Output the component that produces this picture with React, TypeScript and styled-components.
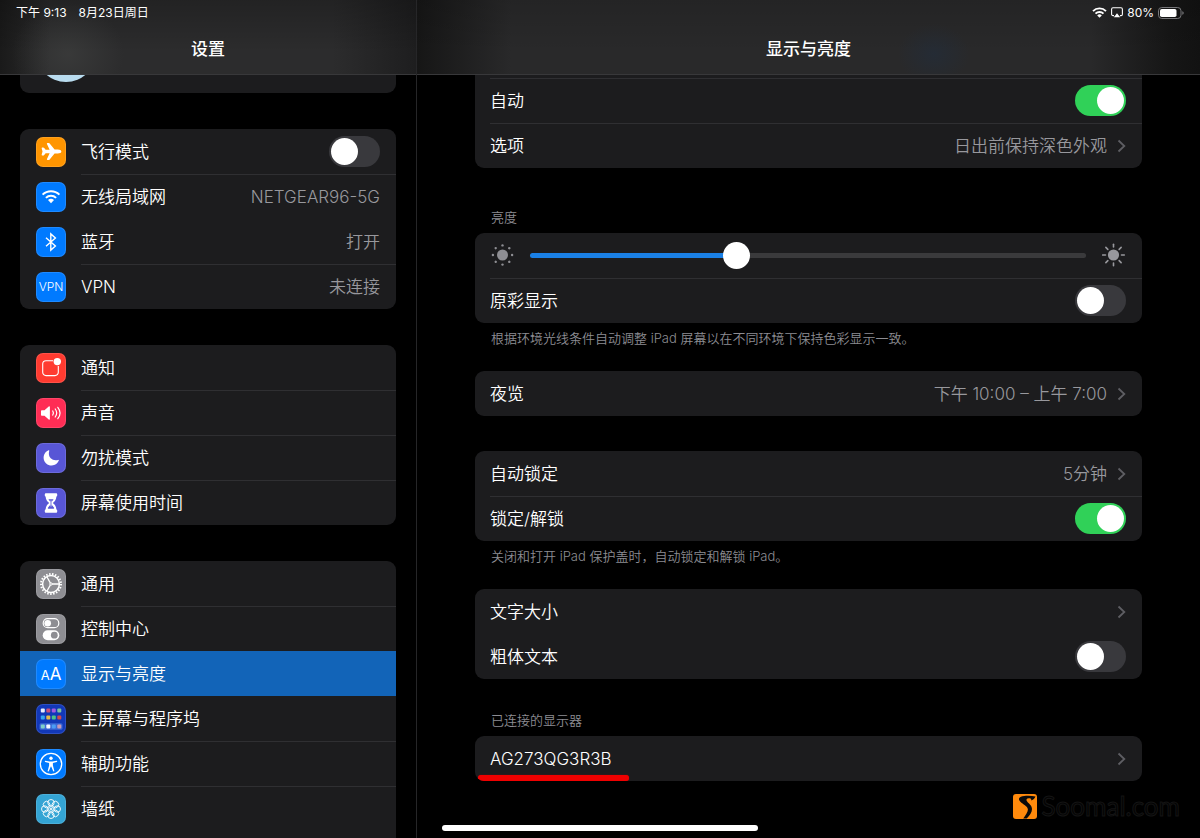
import React, { useState } from "react";
import styled, { createGlobalStyle, css } from "styled-components";
import { IoAirplane } from "react-icons/io5";

const GlobalStyle = createGlobalStyle`
  *, *::before, *::after { box-sizing: border-box; }
  html, body { margin: 0; background: #000; }
  body {
    color: #fff;
    font-family: Inter, "Noto Sans CJK SC", sans-serif;
    font-size: 17px;
    line-height: 25px;
    font-weight: 350;
  }
`;

/* ---------- page frame ---------- */

const Shell = styled.div`
  position: relative;
  display: grid;
  grid-template-columns: minmax(280px, 26fr) 49fr;
  height: 100vh;
  overflow: hidden;
  background: #000;
`;

const Pane = styled.section`
  display: flex;
  flex-direction: column;
  min-width: 0;
  min-height: 0;

  & + & {
    border-left: 1px solid #262628;
  }
`;

const headerTint = {
  sidebar: css`
    background:
      radial-gradient(ellipse 56px 52px at 68px 54px, rgba(80, 82, 80, 0.35), transparent),
      linear-gradient(to bottom, rgba(0, 0, 0, 0.22), transparent 70%),
      linear-gradient(to right, #1a1a1a, #2c2c2d 12%, #2c2c2d 80%, #1e1e1f);
  `,
  detail: css`
    background:
      radial-gradient(ellipse 36px 30px at 66% 54px, rgba(32, 46, 64, 0.5), transparent),
      linear-gradient(to bottom, rgba(0, 0, 0, 0.12), transparent 70%),
      linear-gradient(to right, #161616, #29292a 12%, #29292a 86%, #161616 96%, #121212);
  `,
};

const PaneHeader = styled.header<{ $tint: keyof typeof headerTint }>`
  flex: none;
  height: 75px;
  border-bottom: 1px solid #38383a;
  ${({ $tint }) => headerTint[$tint]}
`;

const StatusBar = styled.div<{ $end?: boolean }>`
  display: flex;
  align-items: center;
  justify-content: ${({ $end }) => ($end ? "flex-end" : "flex-start")};
  gap: ${({ $end }) => ($end ? "4px" : "12px")};
  height: 25px;
  padding: 0 16px;
  font-size: 12px;
  line-height: 17px;
  font-weight: 400;
`;

const Title = styled.h1`
  margin: 0;
  padding: 12px 0;
  font-size: 17px;
  line-height: 25px;
  font-weight: 500;
  text-align: center;
`;

const Scroll = styled.div<{ $inset: string }>`
  flex: 1;
  display: flex;
  flex-direction: column;
  min-height: 0;
  overflow: hidden;
  padding: 0 ${({ $inset }) => $inset};
`;

/* ---------- cards and rows ---------- */

const Card = styled.div<{ $gap?: string; $cut?: "top" | "bottom" }>`
  position: relative;
  flex: ${({ $cut }) => ($cut === "bottom" ? "1 0 auto" : "none")};
  margin-top: ${({ $gap = "0" }) => $gap};
  padding-top: ${({ $cut }) => ($cut === "top" ? "3px" : "0")};
  border-radius: ${({ $cut }) =>
    $cut === "top" ? "0 0 9px 9px" : $cut === "bottom" ? "9px 9px 0 0" : "9px"};
  overflow: hidden;
  background: #1c1c1e;
`;

const ProfileCard = styled.div`
  flex: none;
  display: flex;
  align-items: flex-end;
  height: 18px;
  padding: 0 16px 11px;
  border-radius: 0 0 9px 9px;
  overflow: hidden;
  background: #1c1c1e;
`;

const Avatar = styled.div`
  flex: none;
  width: 60px;
  height: 60px;
  border-radius: 50%;
  background: #b9dcef;
`;

const rowStyle = css`
  display: flex;
  align-items: center;
  width: 100%;
  height: 45px;
  padding: 0;
  border: 0;
  background: none;
  color: #fff;
  font: inherit;
  text-align: left;
  text-decoration: none;
  cursor: pointer;
`;

const RowLink = styled.a<{ $active?: boolean }>`
  ${rowStyle}
  ${({ $active }) => $active && "background: #1264b8;"}
`;

const RowLabel = styled.label`
  ${rowStyle}
`;

const RowButton = styled.button`
  ${rowStyle}
`;

const RowBody = styled.span<{ $line?: boolean }>`
  flex: 1;
  display: flex;
  align-items: center;
  justify-content: space-between;
  height: 45px;
  min-width: 0;
  margin-left: 15px;
  padding-right: 16px;
  box-shadow: inset 0 1px ${({ $line }) => ($line ? "#2f2f32" : "transparent")};
`;

const Name = styled.span`
  padding-top: 2px;
  white-space: nowrap;
`;

const Value = styled(Name)`
  color: #98989d;
`;

const Trailing = styled.span`
  display: flex;
  align-items: center;
  gap: 10px;
`;

const Caption = styled.h2<{ $gap: string }>`
  flex: none;
  margin: ${({ $gap }) => $gap} 16px 7px;
  font-size: 13px;
  line-height: 18px;
  font-weight: 350;
  color: #8c8c92;
`;

const Footnote = styled.p`
  flex: none;
  margin: 6px 16px 24px;
  font-size: 13px;
  line-height: 18px;
  color: #8c8c92;
  white-space: nowrap;
`;

const SliderRow = styled.div`
  display: flex;
  align-items: center;
  gap: 16px;
  height: 44px;
  margin-bottom: 1px;
  padding: 0 16px 0 15px;
`;

/* ---------- controls ---------- */

const Switch = styled.input.attrs({ type: "checkbox", role: "switch" })`
  appearance: none;
  flex: none;
  width: 51px;
  height: 31px;
  margin: 0;
  padding: 2px;
  border-radius: 16px;
  background: #39393d;
  cursor: pointer;

  &::before {
    content: "";
    display: block;
    width: 27px;
    height: 27px;
    border-radius: 50%;
    background: #fff;
  }
  &:checked {
    background: #30d158;
  }
  &:checked::before {
    margin-left: 20px;
  }
`;

const Range = styled.input.attrs({ type: "range" })`
  appearance: none;
  flex: 1;
  min-width: 0;
  height: 27px;
  margin: 0;
  background: none;

  &::-webkit-slider-runnable-track {
    height: 5px;
    border-radius: 3px;
    background: linear-gradient(to right, #1a80e6 var(--fill), #3a3a3c var(--fill));
  }
  &::-webkit-slider-thumb {
    appearance: none;
    width: 27px;
    height: 27px;
    margin-top: -11px;
    border-radius: 50%;
    background: #fff;
  }
`;

const Tile = styled.span<{ $bg: string }>`
  flex: none;
  display: flex;
  align-items: center;
  justify-content: center;
  width: 30px;
  height: 30px;
  margin-left: 16px;
  border-radius: 7px;
  box-shadow: inset 0 0 0 1px rgba(255, 255, 255, 0.12);
  background: ${({ $bg }) => $bg};
  color: #fff;
  overflow: hidden;
`;

const TileText = styled.span`
  font-size: 12px;
  line-height: 17px;
`;

const TileLetters = styled.span`
  padding-top: 2px;
  font-size: 17px;
  line-height: 18px;
  font-weight: 400;

  small {
    font-size: 13px;
  }
`;

/* ---------- overlays ---------- */

const Underline = styled.span`
  position: absolute;
  left: 3px;
  bottom: 0;
  width: 151px;
  height: 6px;
  border-radius: 3px;
  background: #ee0000;
  box-shadow: 0 0 1px #c00000;
`;

const HomeIndicator = styled.div`
  position: absolute;
  left: 50%;
  bottom: 7px;
  width: 316px;
  height: 6px;
  margin-left: -158px;
  border-radius: 3px;
  background: #fff;
`;

const Watermark = styled.div`
  position: absolute;
  right: 20px;
  bottom: 16px;
  display: flex;
  align-items: center;
  gap: 5px;
  font-family: Lato, sans-serif;
  font-size: 26px;
  line-height: 32px;
  font-weight: 400;
  color: #030303;
  -webkit-text-stroke: 1px #141414;
`;

/* ---------- drawings ---------- */

const Glyph = ({ children, size = 30 }: { children: React.ReactNode; size?: number }) => (
  <svg width={size} height={size} viewBox={`0 0 ${size} ${size}`} fill="none" aria-hidden="true">
    {children}
  </svg>
);

const WifiGlyph = () => (
  <Glyph>
    <g stroke="#fff" strokeWidth="2">
      <path d="M6.6 12.6a12 12 0 0 1 16.8 0" />
      <path d="M9.9 15.9a7.3 7.3 0 0 1 10.2 0" />
    </g>
    <path d="M15 21.2l-3-3.1a4.3 4.3 0 0 1 6 0z" fill="#fff" />
  </Glyph>
);

const BluetoothGlyph = () => (
  <Glyph>
    <path d="M10 10.800l9.400 8.300-4.600 4V6.900l4.600 4L10 19.200" stroke="#fff" strokeWidth="1.400" />
  </Glyph>
);

const NotificationGlyph = () => (
  <Glyph>
    <path
      d="M17 7.700H10a3.300 3.300 0 0 0-3.300 3.300v8.300a3.300 3.300 0 0 0 3.300 3.300h9a3.300 3.300 0 0 0 3.300-3.300v-6.300"
      stroke="#fff"
      strokeWidth="1.100"
    />
    <circle cx="21.300" cy="8.600" r="3.700" fill="#fff" />
  </Glyph>
);

const SoundGlyph = () => (
  <Glyph>
    <path d="M5.800 12.300h2.700l4.200-3.900c.6-.5 1.200-.2 1.200.5v12.200c0 .7-.6 1-1.200.5l-4.200-3.900H5.800c-.5 0-.8-.3-.8-.8v-3.800c0-.5.3-.8.8-.8z" fill="#fff" />
    <g stroke="#fff" strokeWidth="1.200" strokeLinecap="round">
      <path d="M16.700 12.900c.9 1.300.9 2.900 0 4.200" />
      <path d="M19.200 11c1.800 2.400 1.800 5.600 0 8" />
      <path d="M21.800 9.300c2.800 3.500 2.800 7.900 0 11.400" />
    </g>
  </Glyph>
);

const MoonGlyph = () => (
  <Glyph>
    <path
      d="M12.500 7.300a.5.500 0 0 1 .7.600c-.8 2.800-.3 5.500 1.500 7.400 1.900 1.900 4.700 2.400 7.500 1.600a.5.500 0 0 1 .6.700A7.900 7.900 0 1 1 12.500 7.300z"
      fill="#fff"
    />
  </Glyph>
);

const HourglassGlyph = () => (
  <Glyph>
    <path
      d="M9.800 5.300h10.400a1 1 0 0 1 1 1v1.200a1 1 0 0 1-.8 1c-.2 3-1.400 4.800-3.600 6.500 2.200 1.700 3.400 3.500 3.600 6.500a1 1 0 0 1 .8 1v1.200a1 1 0 0 1-1 1H9.800a1 1 0 0 1-1-1v-1.200a1 1 0 0 1 .8-1c.2-3 1.400-4.800 3.600-6.500-2.200-1.700-3.400-3.500-3.600-6.500a1 1 0 0 1-.8-1V6.300a1 1 0 0 1 1-1z"
      fill="#fff"
    />
    <path d="M12.400 11.300h5.200l-1.900 2.400v3.100l2.400 3c.3.400.1.900-.4.900h-5.400c-.5 0-.7-.5-.4-.9l2.400-3v-3.100z" fill="#5856d6" />
    <path d="M15 12.500v6" stroke="#fff" strokeWidth=".8" />
  </Glyph>
);

const GearGlyph = () => (
  <Glyph>
    <g stroke="#fff">
      <circle cx="15" cy="15" r="10" strokeWidth="2" strokeDasharray="1.500 1.492" />
      <circle cx="15" cy="15" r="8.400" strokeWidth="1.500" />
      <path d="M15.500 15h7.500M14.700 14.600L11 8M14.700 15.400L11 22" strokeWidth="1.300" />
      <circle cx="15" cy="15" r="1.200" strokeWidth="1" fill="#8e8e93" />
    </g>
  </Glyph>
);

const ControlCenterGlyph = () => (
  <Glyph>
    <rect x="7.200" y="4.700" width="15.600" height="9" rx="4.500" stroke="#fff" strokeWidth="1.200" />
    <circle cx="11.700" cy="9.200" r="3.300" fill="#fff" />
    <rect x="6.700" y="16.200" width="16.600" height="10" rx="5" fill="#fff" />
    <circle cx="18.300" cy="21.200" r="3.400" fill="#8e8e93" />
  </Glyph>
);

const homeDots = [
  ["#e8eefc", "#c8507a", "#a25be0", "#7fc3a0"],
  ["#35a7f0", "#e6b84a", "#4cc38a", "#d24a4a"],
];
const dockDots = ["#7fd0c8", "#f4f6ff", "#4b9df5", "#c79ab8"];

const HomeScreenGlyph = () => (
  <Glyph>
    {homeDots.map((line, r) =>
      line.map((c, i) => (
        <rect key={`${r}${i}`} x={4.800 + i * 5.500} y={4.600 + r * 6.800} width="4" height="4" rx="1" fill={c} />
      ))
    )}
    <rect x="3.500" y="19.300" width="23" height="6.400" rx="1.500" fill="#3d68d4" />
    {dockDots.map((c, i) => (
      <rect key={c} x={4.800 + i * 5.500} y="20.500" width="4" height="4" rx="1" fill={c} />
    ))}
  </Glyph>
);

const AccessibilityGlyph = () => (
  <Glyph>
    <circle cx="15" cy="15" r="10.700" stroke="#fff" strokeWidth="1.300" />
    <circle cx="15" cy="9.300" r="1.700" fill="#fff" />
    <path
      d="M9.400 11.700l4.200.700h2.800l4.200-.7c.7-.1.900 1 .2 1.200l-3.900 1v2.700l1.400 5.100c.2.800-.9 1.200-1.200.4L15.200 17.500h-.4l-1.900 4.600c-.3.800-1.400.4-1.200-.4l1.400-5.100v-2.700l-3.900-1c-.7-.2-.5-1.300.2-1.200z"
      fill="#fff"
    />
  </Glyph>
);

const WallpaperGlyph = () => (
  <Glyph>
    <g stroke="#fff" strokeWidth=".9">
      {[0, 45, 90, 135, 180, 225, 270, 315].map((a) => (
        <circle key={a} cx="15" cy="8.700" r="3.200" transform={`rotate(${a} 15 15)`} />
      ))}
      <circle cx="15" cy="15" r="2.400" />
      <circle cx="15" cy="15" r=".7" fill="#fff" />
    </g>
  </Glyph>
);

const rays = [0, 45, 90, 135, 180, 225, 270, 315];

const SunSmall = () => (
  <Glyph size={24}>
    <circle cx="12.500" cy="12" r="5.500" fill="#8e8e93" />
    {rays.map((a) => (
      <circle key={a} cx="12.500" cy="2.400" r="1.200" fill="#8e8e93" transform={`rotate(${a} 12.500 12)`} />
    ))}
  </Glyph>
);

const SunLarge = () => (
  <Glyph size={24}>
    <circle cx="11.500" cy="12" r="5.600" fill="#98989d" />
    {rays.map((a) => (
      <path key={a} d="M11.500 1.200v2.800" stroke="#98989d" strokeWidth="1.600" strokeLinecap="round" transform={`rotate(${a} 11.500 12)`} />
    ))}
  </Glyph>
);

const Chevron = () => (
  <svg width="9" height="14" viewBox="0 0 9 14" fill="none" aria-hidden="true">
    <path d="M1.500 1.500L7.300 7l-5.800 5.500" stroke="#5e5e63" strokeWidth="1.800" />
  </svg>
);

const StatusWifi = () => (
  <svg width="15" height="11" viewBox="0 0 15 11" fill="none" aria-hidden="true">
    <g stroke="#fff" strokeWidth="1.900">
      <path d="M1 4.100a9.200 9.200 0 0 1 13 0" />
      <path d="M3.500 6.700a5.600 5.600 0 0 1 8 0" />
    </g>
    <path d="M7.500 10.800L5.200 8.500a3.200 3.200 0 0 1 4.600 0z" fill="#fff" />
  </svg>
);

const StatusAirplay = () => (
  <svg width="12" height="11" viewBox="0 0 12 11" fill="none" aria-hidden="true">
    <path d="M3 8.600H2A1.400 1.400 0 0 1 .6 7.200V2.200A1.400 1.400 0 0 1 2 .8h8a1.400 1.400 0 0 1 1.400 1.400v5A1.400 1.400 0 0 1 10 8.600H9" stroke="#fff" strokeWidth="1.100" />
    <path d="M6 6.300l3.200 4H2.800z" fill="#fff" />
  </svg>
);

const StatusBattery = () => (
  <svg width="26" height="12" viewBox="0 0 26 12" fill="none" aria-hidden="true">
    <rect x=".5" y=".5" width="22.500" height="11" rx="3.300" stroke="#77777a" />
    <rect x="2" y="2" width="16.500" height="8" rx="1.800" fill="#fff" />
    <path d="M24.300 4.200c1 .3 1.400 1 1.400 1.800s-.4 1.500-1.400 1.800z" fill="#77777a" />
  </svg>
);

const SoomalMark = () => (
  <svg width="24" height="25" viewBox="0 0 24 25" aria-hidden="true">
    <rect width="24" height="25" rx="3" fill="#ff8a0c" />
    <path
      d="M22.500 2.500c-4.500-1.100-11-1.100-14.600.2-2.500 1-2.300 3.200-.5 5 2.400 2.500 7.200 4.300 7.500 7.600.2 2.800-2.200 5.600-4.700 9.200h3.500c2.800-2.800 5.400-6 5.300-9.500-.1-3.500-3.300-5.300-5-7.700-1.200-1.700-.4-2.900 1.700-3.100 1.700-.1 2.700.3 2.700 2.200 1.900-.6 3.400-1.900 4.100-3.900z"
      fill="#0a0a0a"
    />
  </svg>
);

/* ---------- content ---------- */

type Item = {
  name: string;
  bg: string;
  glyph: React.ReactNode;
  value?: string;
  line?: boolean;
  active?: boolean;
};

const network: Item[] = [
  { name: "无线局域网", bg: "#007aff", glyph: <WifiGlyph />, value: "NETGEAR96-5G", line: true },
  { name: "蓝牙", bg: "#007aff", glyph: <BluetoothGlyph />, value: "打开" },
  { name: "VPN", bg: "#007aff", glyph: <TileText>VPN</TileText>, value: "未连接", line: true },
];

const alerts: Item[] = [
  { name: "通知", bg: "#ff3b30", glyph: <NotificationGlyph /> },
  { name: "声音", bg: "#ff2d55", glyph: <SoundGlyph />, line: true },
  { name: "勿扰模式", bg: "#5856d6", glyph: <MoonGlyph />, line: true },
  { name: "屏幕使用时间", bg: "#5856d6", glyph: <HourglassGlyph />, line: true },
];

const system: Item[] = [
  { name: "通用", bg: "#8e8e93", glyph: <GearGlyph /> },
  { name: "控制中心", bg: "#8e8e93", glyph: <ControlCenterGlyph />, line: true },
  {
    name: "显示与亮度",
    bg: "#007aff",
    glyph: (
      <TileLetters>
        <small>A</small>A
      </TileLetters>
    ),
    active: true,
  },
  { name: "主屏幕与程序坞", bg: "#1238b8", glyph: <HomeScreenGlyph /> },
  { name: "辅助功能", bg: "#007aff", glyph: <AccessibilityGlyph />, line: true },
  { name: "墙纸", bg: "#34a4d4", glyph: <WallpaperGlyph />, line: true },
];

const NavRow = ({ item }: { item: Item }) => (
  <RowLink href="#" $active={item.active} aria-current={item.active ? "page" : undefined}>
    <Tile $bg={item.bg}>{item.glyph}</Tile>
    <RowBody $line={item.line}>
      <Name>{item.name}</Name>
      {item.value && <Value>{item.value}</Value>}
    </RowBody>
  </RowLink>
);

const DetailRow = ({ name, value, line }: { name: string; value?: string; line?: boolean }) => (
  <RowButton type="button">
    <RowBody $line={line}>
      <Name>{name}</Name>
      <Trailing>
        {value && <Value>{value}</Value>}
        <Chevron />
      </Trailing>
    </RowBody>
  </RowButton>
);

const SwitchRow = ({ name, on = false, line }: { name: string; on?: boolean; line?: boolean }) => (
  <RowLabel>
    <RowBody $line={line}>
      <Name>{name}</Name>
      <Switch defaultChecked={on} />
    </RowBody>
  </RowLabel>
);

export default function App() {
  const [brightness, setBrightness] = useState(36.4);

  return (
    <>
      <GlobalStyle />
      <Shell>
        <Pane>
          <PaneHeader $tint="sidebar">
            <StatusBar>
              <span>下午 9:13</span>
              <span>8月23日周日</span>
            </StatusBar>
            <Title>设置</Title>
          </PaneHeader>
          <Scroll as="nav" $inset="20px">
            <ProfileCard>
              <Avatar />
            </ProfileCard>
            <Card $gap="36px">
              <RowLabel>
                <Tile $bg="#ff9500">
                  <IoAirplane size={21} />
                </Tile>
                <RowBody>
                  <Name>飞行模式</Name>
                  <Switch />
                </RowBody>
              </RowLabel>
              {network.map((item) => (
                <NavRow key={item.name} item={item} />
              ))}
            </Card>
            <Card $gap="36px">
              {alerts.map((item) => (
                <NavRow key={item.name} item={item} />
              ))}
            </Card>
            <Card $gap="36px" $cut="bottom">
              {system.map((item) => (
                <NavRow key={item.name} item={item} />
              ))}
            </Card>
          </Scroll>
        </Pane>

        <Pane>
          <PaneHeader $tint="detail">
            <StatusBar $end>
              <StatusWifi />
              <StatusAirplay />
              <span>80%</span>
              <StatusBattery />
            </StatusBar>
            <Title>显示与亮度</Title>
          </PaneHeader>
          <Scroll as="main" $inset="58px">
            <Card $cut="top">
              <SwitchRow name="自动" on line />
              <DetailRow name="选项" value="日出前保持深色外观" line />
            </Card>

            <Caption $gap="40px">亮度</Caption>
            <Card>
              <SliderRow>
                <SunSmall />
                <Range
                  aria-label="亮度"
                  min={0}
                  max={100}
                  step={0.1}
                  value={brightness}
                  onChange={(e) => setBrightness(Number(e.target.value))}
                  style={{ "--fill": `${brightness}%` } as React.CSSProperties}
                />
                <SunLarge />
              </SliderRow>
              <SwitchRow name="原彩显示" line />
            </Card>
            <Footnote>根据环境光线条件自动调整 iPad 屏幕以在不同环境下保持色彩显示一致。</Footnote>

            <Card>
              <DetailRow name="夜览" value="下午 10:00 – 上午 7:00" />
            </Card>

            <Card $gap="35px">
              <DetailRow name="自动锁定" value="5分钟" />
              <SwitchRow name="锁定/解锁" on line />
            </Card>
            <Footnote>关闭和打开 iPad 保护盖时，自动锁定和解锁 iPad。</Footnote>

            <Card>
              <DetailRow name="文字大小" />
              <SwitchRow name="粗体文本" />
            </Card>

            <Caption $gap="32px">已连接的显示器</Caption>
            <Card>
              <DetailRow name="AG273QG3R3B" />
              <Underline />
            </Card>
          </Scroll>
        </Pane>

        <Watermark>
          <SoomalMark />
          <span>Soomal.com</span>
        </Watermark>
        <HomeIndicator />
      </Shell>
    </>
  );
}
